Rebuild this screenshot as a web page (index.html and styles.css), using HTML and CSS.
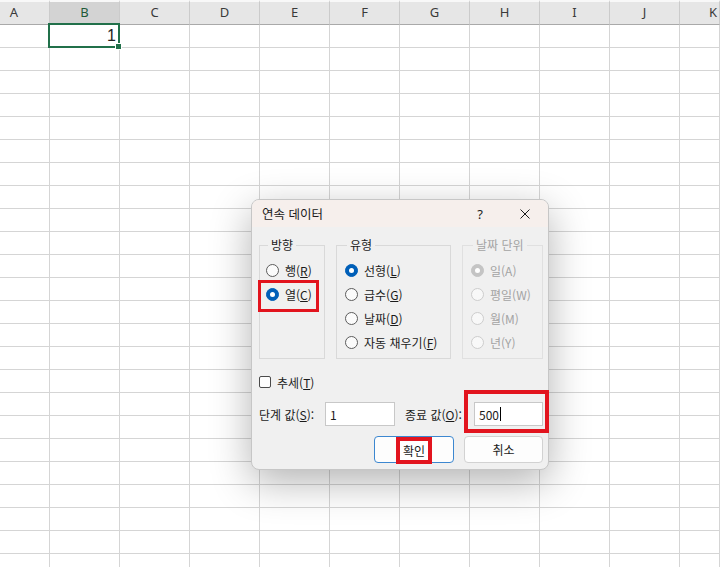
FILE: index.html
```html
<!DOCTYPE html>
<html lang="ko">
<head>
    <meta charset="UTF-8">
    <meta name="viewport" content="width=device-width, initial-scale=1.0">
    <title>연속 데이터</title>
    <link rel="stylesheet" href="styles.css">
</head>
<body>
    <div class="sheet" id="sheet"></div>

    <div class="dialog">
        <div class="titlebar">
            <span class="title">연속 데이터</span>
            <span class="cap-btn help">?</span>
            <span class="cap-btn close">
                <svg width="10" height="10" viewBox="0 0 10 10">
                    <path d="M0.5 0.5 L9.5 9.5 M9.5 0.5 L0.5 9.5" stroke="#1b1b1b" stroke-width="1" fill="none"/>
                </svg>
            </span>
        </div>
        <div class="body">
            <div class="groups">
                <fieldset class="group group-dir">
                    <legend>방향</legend>
                    <div class="radio"><span class="dot"></span><span>행(<u>R</u>)</span></div>
                    <div class="radio"><span class="dot on"></span><span>열(<u>C</u>)</span></div>
                </fieldset>
                <fieldset class="group group-type">
                    <legend>유형</legend>
                    <div class="radio"><span class="dot on"></span><span>선형(<u>L</u>)</span></div>
                    <div class="radio"><span class="dot"></span><span>급수(<u>G</u>)</span></div>
                    <div class="radio"><span class="dot"></span><span>날짜(<u>D</u>)</span></div>
                    <div class="radio"><span class="dot"></span><span>자동 채우기(<u>F</u>)</span></div>
                </fieldset>
                <fieldset class="group group-date disabled">
                    <legend>날짜 단위</legend>
                    <div class="radio"><span class="dot on"></span><span>일(A)</span></div>
                    <div class="radio"><span class="dot"></span><span>평일(W)</span></div>
                    <div class="radio"><span class="dot"></span><span>월(M)</span></div>
                    <div class="radio"><span class="dot"></span><span>년(Y)</span></div>
                </fieldset>
            </div>

            <div class="check"><span class="box"></span><span>추세(<u>T</u>)</span></div>

            <div class="values">
                <span class="label">단계 값(<u>S</u>):</span>
                <div class="field">1</div>
                <span class="label label-end">종료 값(<u>O</u>):</span>
                <div class="field">500<span class="caret"></span></div>
            </div>

            <div class="buttons">
                <button class="btn btn-default"><span class="hl">확인</span></button>
                <button class="btn">취소</button>
            </div>
        </div>

        <!-- 강조 표시 -->
        <div class="mark mark-col"></div>
        <div class="mark mark-end"></div>
    </div>

    <script>
        document.addEventListener("DOMContentLoaded", () => {
            const sheet = document.getElementById("sheet");
            const cols = ["A", "B", "C", "D", "E", "F", "G", "H", "I", "J", "K"];

            // 열 머리글
            cols.forEach((name, i) => {
                const head = document.createElement("div");
                head.className = "head";
                if (i === 0) head.classList.add("head-first");
                if (i === 1) head.classList.add("head-sel");
                if (i === cols.length - 1) head.classList.add("head-last");
                head.textContent = name;
                sheet.appendChild(head);
            });

            // 셀
            for (let r = 0; r < 24; r++) {
                cols.forEach((name, c) => {
                    const cell = document.createElement("div");
                    cell.className = "cell";
                    if (r === 0 && c === 1) {
                        cell.classList.add("active");
                        cell.textContent = "1";
                    }
                    sheet.appendChild(cell);
                });
            }
        });
    </script>
</body>
</html>
```

FILE: styles.css
```css
body {
    margin: 0;
    width: 720px;
    height: 567px;
    overflow: hidden;
    position: relative;
    background-color: #fff;
    font-family: "Noto Sans CJK KR", "Noto Sans", sans-serif;
}

/* 시트 */
.sheet {
    display: grid;
    grid-template-columns: 50px repeat(9, 70px) 1fr;
}

.head {
    height: 25px;
    box-sizing: border-box;
    background-color: #e6e6e6;
    border-top: 2px solid #f8f8f8;
    border-bottom: 1px solid #a9a9a9;
    border-right: 1px solid #cbcbcb;
    display: flex;
    align-items: center;
    justify-content: center;
    padding-bottom: 2px;
    font-family: "Noto Sans", sans-serif;
    font-size: 13px;
    color: #3a3a3a;
}

.head-first {
    padding-right: 21px;
}

.head-last {
    justify-content: flex-start;
    padding-left: 29px;
}

.head-sel {
    background-color: #d3d3d3;
    color: #1f5a38;
}

.cell {
    height: 23px;
    box-sizing: border-box;
    border-right: 1px solid #d5d5d5;
    border-bottom: 1px solid #d5d5d5;
}

.cell.active {
    position: relative;
    text-align: right;
    padding-right: 3px;
    font-family: "Liberation Sans", sans-serif;
    font-size: 16px;
    line-height: 22px;
    color: #222;
}

.cell.active::before {
    content: "";
    position: absolute;
    top: -2px;
    left: -2px;
    right: -1px;
    bottom: -1px;
    border: 2px solid #21704a;
}

.cell.active::after {
    content: "";
    position: absolute;
    right: -3px;
    bottom: -3px;
    width: 5px;
    height: 5px;
    background-color: #21704a;
    border: 1px solid #fff;
}

/* 대화 상자 */
.dialog {
    position: absolute;
    left: 251px;
    top: 199px;
    width: 298px;
    height: 271px;
    box-sizing: border-box;
    background-color: #f0f0f0;
    border: 1px solid #c6c6c6;
    border-radius: 8px;
    box-shadow: 0 12px 40px rgba(0, 0, 0, 0.3);
    font-size: 12px;
    color: #1b1b1b;
}

.titlebar {
    height: 27px;
    display: flex;
    align-items: center;
    background-color: #f6efec;
    border-radius: 7px 7px 0 0;
}

.title {
    flex: 1;
    padding-left: 10px;
    font-size: 12.5px;
}

.cap-btn {
    height: 27px;
    display: flex;
    align-items: center;
    justify-content: center;
}

.help {
    width: 44px;
    font-family: "Noto Sans", sans-serif;
    font-size: 13px;
}

.close {
    width: 46px;
}

.body {
    padding: 10px 5px 0 7px;
}

.groups {
    display: flex;
    gap: 11px;
}

.group {
    margin: 0;
    height: 122px;
    box-sizing: border-box;
    border: 1px solid #d9d9d9;
    padding: 5px 0 0 8px;
}

.group legend {
    margin-left: 2px;
    padding: 0 3px;
    line-height: 16px;
}

.group-dir {
    width: 66px;
    padding-left: 6px;
}

.group-type {
    width: 115px;
}

.group-date {
    width: 81px;
    border-color: #e0e0e0;
}

.radio {
    height: 24px;
    display: flex;
    align-items: center;
    gap: 6px;
    white-space: nowrap;
}

.dot {
    width: 13px;
    height: 13px;
    box-sizing: border-box;
    border-radius: 50%;
    border: 1px solid #5c5c5c;
    background-color: #fbfbfb;
    display: flex;
    align-items: center;
    justify-content: center;
    flex-shrink: 0;
}

.dot.on {
    border-color: #005fb8;
    background-color: #005fb8;
}

.dot.on::after {
    content: "";
    width: 5px;
    height: 5px;
    border-radius: 50%;
    background-color: #fff;
}

.disabled {
    color: #a3a3a3;
}

.disabled .dot {
    border-color: #cdcdcd;
    background-color: #f8f8f8;
}

.disabled .dot.on {
    border-color: #c4c4c4;
    background-color: #c4c4c4;
}

.check {
    margin-top: 15px;
    height: 16px;
    display: flex;
    align-items: center;
    gap: 6px;
}

.box {
    width: 12px;
    height: 12px;
    box-sizing: border-box;
    border: 1px solid #4a4a4a;
    border-radius: 2px;
    background-color: #fdfdfd;
}

.values {
    margin-top: 12px;
    display: grid;
    grid-template-columns: 66px 70px 79px 69px;
    align-items: center;
}

.label-end {
    padding-left: 10px;
}

.field {
    height: 24px;
    box-sizing: border-box;
    background-color: #fff;
    border: 1px solid #c8c8c8;
    padding-left: 4px;
    display: flex;
    align-items: center;
    font-size: 12px;
}

.caret {
    width: 1px;
    height: 14px;
    margin-left: 1px;
    background-color: #000;
}

.buttons {
    margin-top: 10px;
    display: flex;
    justify-content: flex-end;
    gap: 10px;
}

.btn {
    height: 27px;
    box-sizing: border-box;
    background-color: #fdfdfd;
    border: 1px solid #d2d2d2;
    border-radius: 4px;
    font-family: inherit;
    font-size: 12px;
    color: #1b1b1b;
    padding: 0;
    display: flex;
    align-items: center;
    justify-content: center;
    width: 79px;
}

.btn-default {
    width: 80px;
    border-color: #3c87d0;
    overflow: visible;
}

.hl {
    position: relative;
    top: 1px;
    height: 27px;
    box-sizing: border-box;
    padding: 0 3px;
    display: flex;
    align-items: center;
    background-color: #fff;
    border: 4px solid #e2141e;
}

.mark {
    position: absolute;
    box-sizing: border-box;
    border: 3px solid #e2141e;
}

.mark-col {
    left: 6px;
    top: 80px;
    width: 61px;
    height: 32px;
}

.mark-end {
    left: 212px;
    top: 190px;
    width: 85px;
    height: 43px;
    border-width: 4px;
}
```
